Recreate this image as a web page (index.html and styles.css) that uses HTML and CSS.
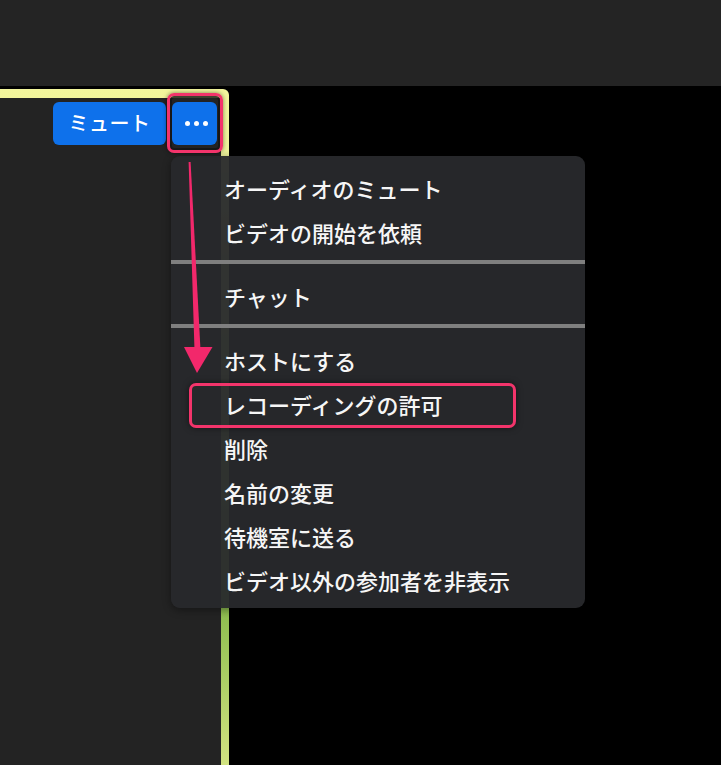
FILE: index.html
```html
<!DOCTYPE html>
<html lang="ja">
<head>
<meta charset="UTF-8" />
<meta name="viewport" content="width=device-width, initial-scale=1" />
<title>参加者メニュー</title>
<link rel="stylesheet" href="styles.css">
</head>
<body>

<div class="app">
  <header class="topbar"></header>

  <main class="stage">
    <section class="tile">
      <div class="tile-body">
        <div class="tile-controls">
          <button class="btn btn-mute">ミュート</button>
          <button class="btn btn-more" aria-label="その他">
            <span class="dot"></span><span class="dot"></span><span class="dot"></span>
          </button>
        </div>
      </div>
    </section>
    <div class="stage-rest"></div>
  </main>

  <!-- 参加者メニュー -->
  <ul class="menu">
    <li class="menu-item">オーディオのミュート</li>
    <li class="menu-item">ビデオの開始を依頼</li>
    <li class="menu-sep"></li>
    <li class="menu-item">チャット</li>
    <li class="menu-sep"></li>
    <li class="menu-item">ホストにする</li>
    <li class="menu-item">レコーディングの許可</li>
    <li class="menu-item">削除</li>
    <li class="menu-item">名前の変更</li>
    <li class="menu-item">待機室に送る</li>
    <li class="menu-item">ビデオ以外の参加者を非表示</li>
  </ul>

  <!-- 注釈 -->
  <div class="mark mark-more"></div>
  <div class="mark mark-item"></div>
  <svg class="arrow" width="721" height="765" viewBox="0 0 721 765">
    <polygon points="188.6,162 190.6,162 200.5,350 194.5,350" />
    <polygon points="184,347 212.5,347 197,373" />
  </svg>
</div>

</body>
</html>
```

FILE: styles.css
```css
body {
  margin: 0;
  background: #000;
  font-family: "Noto Sans CJK JP", "Noto Sans", sans-serif;
}
.app {
  position: relative;
  width: 721px;
  height: 765px;
  overflow: hidden;
  display: flex;
  flex-direction: column;
}
.topbar {
  height: 86px;
  background: #242424;
}

.stage {
  flex: 1;
  display: flex;
  padding-top: 3px;
  background: #000;
}
.tile {
  width: 229px;
  box-sizing: border-box;
  display: flex;
  padding: 9px 8px 0 0;
  border-top-right-radius: 6px;
  background: linear-gradient(to bottom, #f2f59c 0%, #eef39a 12%, #8dbd4f 77%, #d2e381 100%);
}
.tile-body {
  flex: 1;
  background: #232323;
}
.tile-controls {
  display: flex;
  justify-content: flex-end;
  gap: 6px;
  padding: 4px 4px 0 0;
}
.stage-rest { flex: 1; }

.btn {
  height: 43px;
  border: none;
  border-radius: 6px;
  background: #0e71eb;
  color: #fff;
  font-family: inherit;
  cursor: pointer;
}
.btn-mute {
  width: 113px;
  font-size: 20px;
  font-weight: 500;
  letter-spacing: 0.5px;
  padding: 0 0 2px;
}
.btn-more {
  width: 45px;
  display: flex;
  align-items: center;
  justify-content: center;
  gap: 4px;
  padding: 0 0 0 3px;
}
.dot {
  width: 5px;
  height: 5px;
  border-radius: 50%;
  background: #fff;
}

.menu {
  position: absolute;
  left: 171px;
  top: 156px;
  width: 414px;
  margin: 0;
  padding: 11px 0 5px;
  list-style: none;
  border-radius: 9px;
  background: rgba(40, 41, 44, 0.95);
  box-shadow: 0 2px 8px rgba(0,0,0,0.4);
}
.menu-item {
  height: 44px;
  line-height: 42px;
  padding-left: 53px;
  color: #f6f6f6;
  font-size: 22px;
  font-weight: 500;
}
.menu-sep {
  height: 4px;
  margin: 5px 0 11px;
  background: #7f7f7f;
}

.mark {
  position: absolute;
  box-sizing: border-box;
  border: 3px solid #f3346b;
  border-radius: 7px;
  box-shadow: 0 0 4px rgba(0,0,0,0.5), inset 0 0 0 2px rgba(20,20,20,0.8);
}
.mark-more {
  left: 167px;
  top: 93px;
  width: 56px;
  height: 60px;
}
.mark-item {
  left: 189px;
  top: 383px;
  width: 327px;
  height: 45px;
  box-shadow: 0 0 6px rgba(0,0,0,0.5);
}
.arrow {
  position: absolute;
  left: 0;
  top: 0;
  fill: #f2286b;
}
```
